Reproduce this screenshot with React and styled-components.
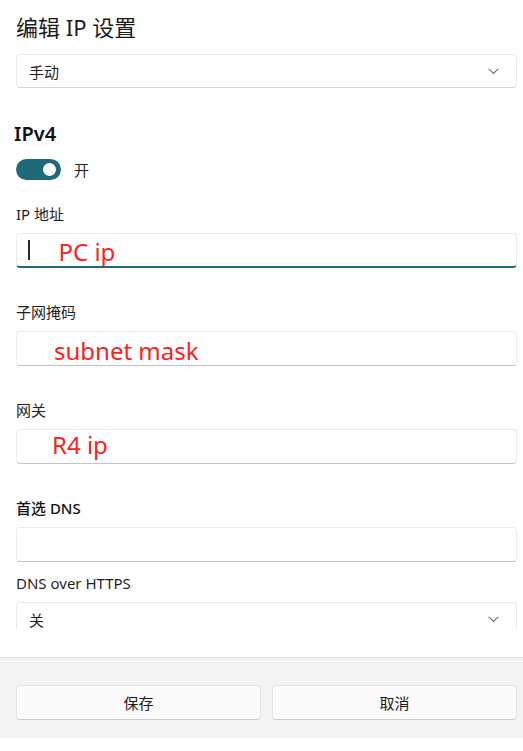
import styled, { createGlobalStyle } from "styled-components";

const GlobalStyle = createGlobalStyle`
  html, body {
    margin: 0;
    padding: 0;
    background: #ffffff;
  }
  body {
    font-family: "Noto Sans", "Noto Sans CJK SC", sans-serif;
    color: #1b1b1b;
  }
`;

const Chevron = () => (
  <svg width="11" height="7" viewBox="0 0 11 7" fill="none">
    <path d="M1 1.2 L5.5 5.4 L10 1.2" stroke="#6a6a6a" strokeWidth="1.1" strokeLinecap="round" strokeLinejoin="round" />
  </svg>
);

const App = () => {
  return (
    <Page>
      <GlobalStyle />
      <ScrollArea>
        <Title>编辑 IP 设置</Title>
        <Select $top={13}>
          <span>手动</span>
          <Chevron />
        </Select>

        <Heading>IPv4</Heading>
        <ToggleRow>
          <Toggle>
            <Knob />
          </Toggle>
          <ToggleText>开</ToggleText>
        </ToggleRow>

        <Label $top={24}>IP 地址</Label>
        <Input $focused>
          <Caret />
          <Note $indent={29} $shift={4}>PC ip</Note>
        </Input>

        <Label $top={34}>子网掩码</Label>
        <Input>
          <Note $indent={26} $shift={4}>subnet mask</Note>
        </Input>

        <Label $top={34}>网关</Label>
        <Input>
          <Note $indent={24} $shift={-4}>R4 ip</Note>
        </Input>

        <Label $top={34} $strong>首选 DNS</Label>
        <Input />

        <Label $top={11}>DNS over HTTPS</Label>
        <Select $top={9}>
          <span>关</span>
          <Chevron />
        </Select>
      </ScrollArea>

      <Footer>
        <Button>保存</Button>
        <Button>取消</Button>
      </Footer>
    </Page>
  );
};

const Page = styled.div`
  width: 523px;
  display: flex;
  flex-direction: column;
`;

const ScrollArea = styled.div`
  height: 629px;
  overflow: hidden;
  padding: 0 6px 0 16px;
  margin-bottom: 28px;
  display: flex;
  flex-direction: column;
`;

const Title = styled.div`
  margin-top: 13px;
  font-size: 22px;
  line-height: 28px;
  color: #1a1a1a;
`;

const Select = styled.div`
  margin-top: ${(p) => p.$top}px;
  flex-shrink: 0;
  height: 34px;
  box-sizing: border-box;
  background: #ffffff;
  border: 1px solid #ebebeb;
  border-bottom-color: #d6d6d6;
  border-radius: 4px;
  display: flex;
  align-items: center;
  justify-content: space-between;
  padding: 0 17px 0 12px;
  font-size: 15px;
  color: #1f1f1f;
`;

const Heading = styled.div`
  margin-top: 32px;
  font-size: 20px;
  line-height: 28px;
  font-weight: 600;
  color: #111;
  margin-left: -2px;
`;

const ToggleRow = styled.div`
  margin-top: 11px;
  display: flex;
  align-items: center;
  gap: 13px;
  height: 22px;
`;

const Toggle = styled.div`
  width: 45px;
  height: 21px;
  border-radius: 11px;
  background: #1f6a78;
  display: flex;
  align-items: center;
  justify-content: flex-end;
  padding-right: 5px;
  box-sizing: border-box;
`;

const Knob = styled.div`
  width: 13px;
  height: 13px;
  border-radius: 50%;
  background: #ffffff;
`;

const ToggleText = styled.span`
  font-size: 15px;
  color: #1f1f1f;
`;

const Label = styled.div`
  margin-top: ${(p) => p.$top}px;
  font-size: 15px;
  line-height: 20px;
  font-weight: ${(p) => (p.$strong ? 500 : 400)};
  color: ${(p) => (p.$strong ? "#111" : "#1f1f1f")};
`;

const Input = styled.div`
  margin-top: 9px;
  flex-shrink: 0;
  height: 35px;
  box-sizing: border-box;
  background: #ffffff;
  border: 1px solid #ececec;
  border-bottom: ${(p) => (p.$focused ? "2px solid #1f6a78" : "1px solid #c4c4c4")};
  border-radius: 4px;
  display: flex;
  align-items: center;
  padding-left: 11px;
`;

const Caret = styled.div`
  width: 1.5px;
  height: 20px;
  background: #2a2a2a;
`;

const Note = styled.span`
  margin-left: ${(p) => p.$indent}px;
  margin-top: ${(p) => p.$shift}px;
  font-size: 24px;
  line-height: 30px;
  color: #ff2020;
`;

const Footer = styled.div`
  height: 81px;
  box-sizing: border-box;
  background: #f3f3f3;
  border-top: 1px solid #e5e5e5;
  padding: 27px 6px 0 16px;
  display: grid;
  grid-template-columns: 1fr 1fr;
  column-gap: 11px;
  align-items: start;
`;

const Button = styled.div`
  height: 35px;
  box-sizing: border-box;
  background: #fbfbfb;
  border: 1px solid #e3e3e3;
  border-bottom-color: #cdcdcd;
  border-radius: 4px;
  display: flex;
  align-items: center;
  justify-content: center;
  font-size: 15px;
  color: #1b1b1b;
`;

export default App;
